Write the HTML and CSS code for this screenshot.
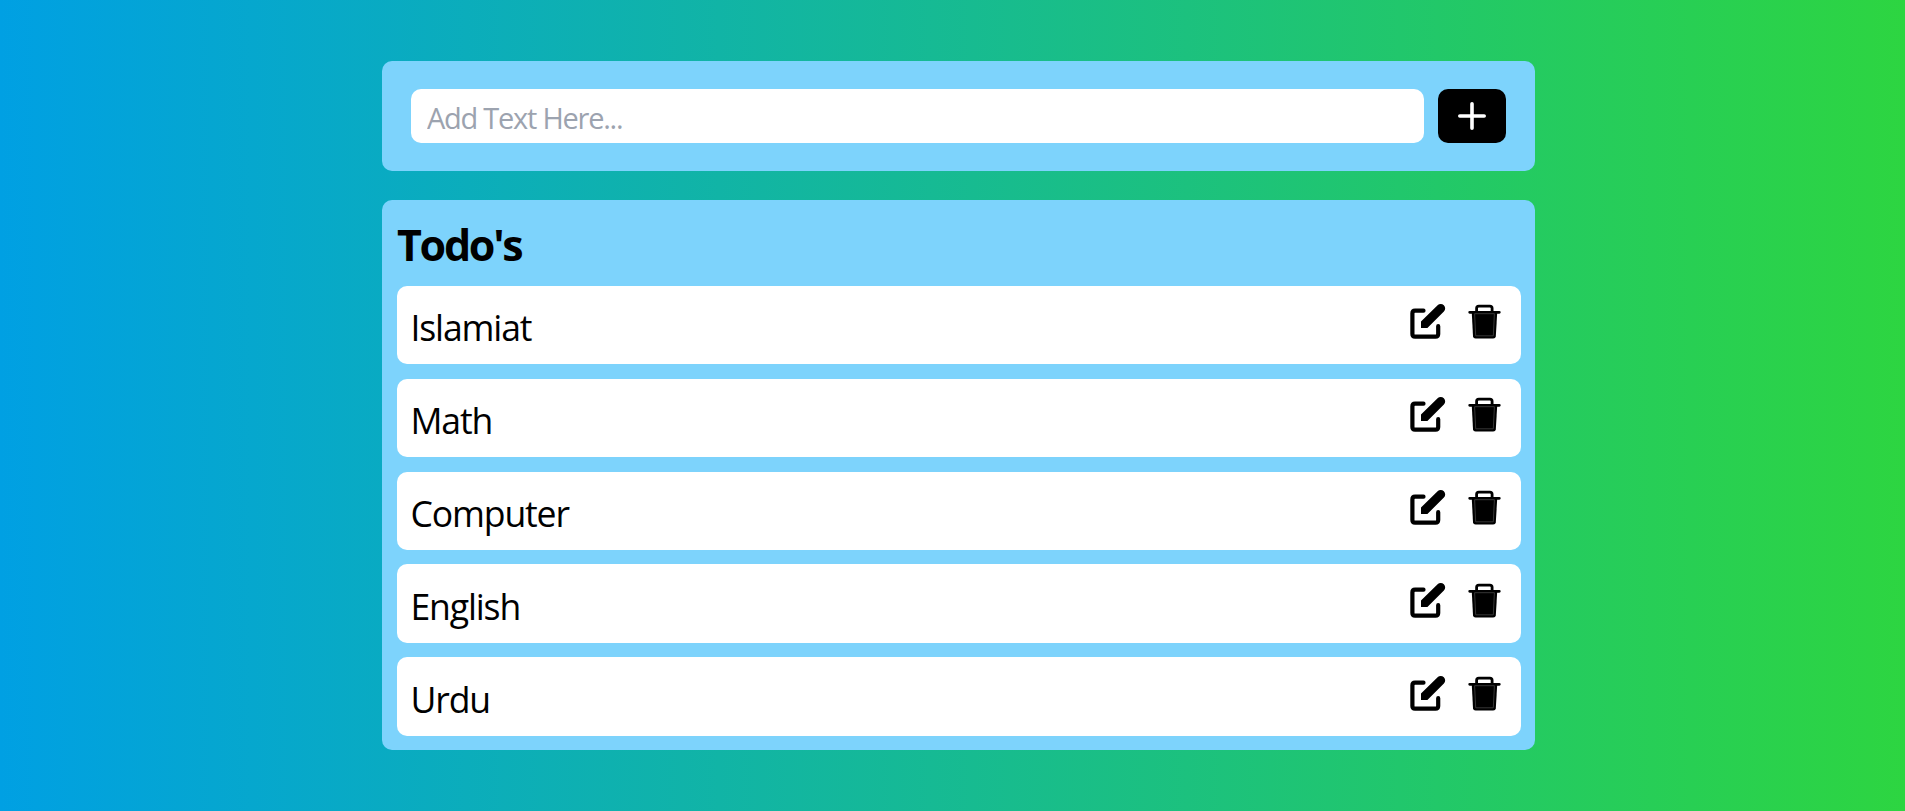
FILE: index.html
```html
<!DOCTYPE html>
<html lang="en">
<head>
<meta charset="utf-8">
<title>Todo's</title>
<link rel="stylesheet" href="styles.css">
</head>
<body>
<svg class="sprite" aria-hidden="true">
  <symbol id="edit" viewBox="0 0 50 50">
    <path d="M23.5 14.7H15Q12.4 14.7 12.4 17.3V38Q12.4 40.7 15 40.7H35.5Q38.2 40.7 38.2 38V30.2" fill="none" stroke="#000" stroke-width="4.2" stroke-linecap="round"/>
    <path d="M21 32V25.4L37.6 9.3A4.4 4.4 0 0 1 43.9 15.5L27.4 32Z"/>
  </symbol>
  <symbol id="trash" viewBox="0 0 50 50">
    <path d="M11.8 17H37.2L35.8 40.2Q35.6 42.6 33.2 42.6H15.6Q13.2 42.6 13 40.2Z"/>
    <path d="M9.7 16.3H39.3M16.6 15.5V12.3Q16.6 10.1 18.8 10.1H29.9Q32.1 10.1 32.1 12.3V15.5" fill="none" stroke="#000" stroke-width="2.8" stroke-linecap="round"/>
    <path d="M14.6 17.7H34.4L33.3 39.8H15.7Z" fill="none" stroke="#444" stroke-width=".8"/>
  </symbol>
</svg>
<main class="app">
  <form class="panel add">
    <input class="field" type="text" placeholder="Add Text Here...">
    <button class="add-btn" type="button" aria-label="Add">
      <svg class="plus" viewBox="0 0 28 28"><path d="M14 1.8V26.2M1.8 14H26.2" stroke="#fff" stroke-width="3.6" stroke-linecap="round"/></svg>
    </button>
  </form>
  <section class="panel todos">
    <h1 class="title">Todo's</h1>
    <ul class="list">
      <li class="item"><span class="label">Islamiat</span><svg class="icon"><use href="#edit"/></svg><svg class="icon trash"><use href="#trash"/></svg></li>
      <li class="item"><span class="label">Math</span><svg class="icon"><use href="#edit"/></svg><svg class="icon trash"><use href="#trash"/></svg></li>
      <li class="item"><span class="label">Computer</span><svg class="icon"><use href="#edit"/></svg><svg class="icon trash"><use href="#trash"/></svg></li>
      <li class="item"><span class="label">English</span><svg class="icon"><use href="#edit"/></svg><svg class="icon trash"><use href="#trash"/></svg></li>
      <li class="item"><span class="label">Urdu</span><svg class="icon"><use href="#edit"/></svg><svg class="icon trash"><use href="#trash"/></svg></li>
    </ul>
  </section>
</main>
</body>
</html>
```
FILE: styles.css
```css
* { box-sizing: border-box; margin: 0; padding: 0; }
body {
  height: 811px;
  overflow: hidden;
  font-family: "Open Sans", "Noto Sans", sans-serif;
  color: #000;
  background: linear-gradient(to right, #00a0e3, #2dd541);
}
.sprite { display: none; }
.app {
  width: 1153px;
  margin-left: 382px;
  padding-top: 61px;
  display: flex;
  flex-direction: column;
  gap: 29px;
}
.panel { background: #7dd3fc; border-radius: 10px; }
.add { display: flex; gap: 14px; height: 110px; padding: 28px 29px; }
.field {
  flex: 1;
  min-width: 0;
  border: 0;
  border-radius: 10px;
  padding: 2px 16px 0;
  font: 29px "Open Sans", "Noto Sans", sans-serif;
  letter-spacing: -1.25px;
  background: #fff;
}
.field::placeholder { color: #9ca3af; opacity: 1; }
.add-btn {
  width: 68px;
  border: 0;
  border-radius: 10px;
  background: #000;
  display: flex;
  align-items: center;
  justify-content: center;
}
.plus { width: 28px; height: 28px; }
.todos { height: 550px; padding: 14.5px 14px 14px 15px; }
.title { font-size: 43px; line-height: 60px; letter-spacing: -2.3px; margin-bottom: 11.3px; }
.list { list-style: none; display: flex; flex-direction: column; gap: 14.5px; }
.item {
  height: 78.4px;
  display: flex;
  padding: 10.2px 11px 0 13.5px;
  background: #fff;
  border-radius: 10px;
}
.label { flex: 1; font-size: 35.6px; line-height: 62px; letter-spacing: -1.15px; }
.icon { width: 50px; height: 50px; }
.trash { margin-left: 10px; }
```
